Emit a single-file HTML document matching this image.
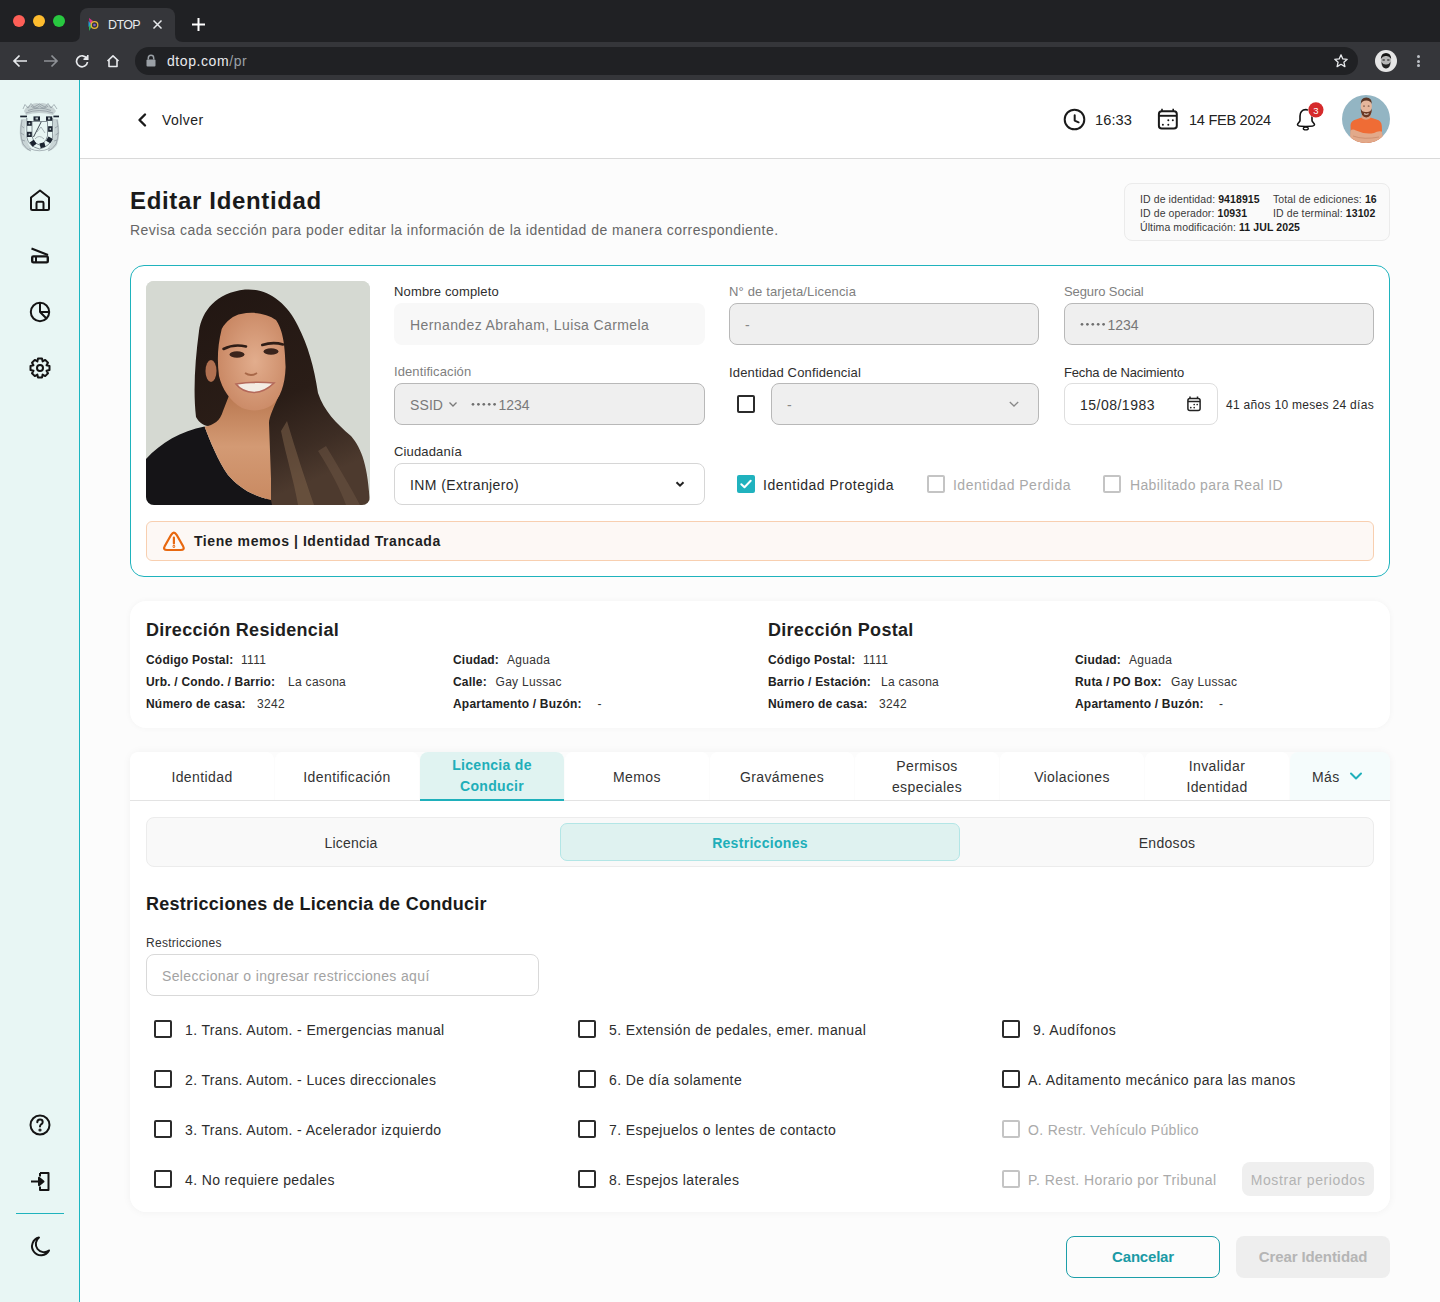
<!DOCTYPE html>
<html><head><meta charset="utf-8">
<style>
*{box-sizing:border-box;margin:0;padding:0}
html,body{width:1440px;height:1302px;overflow:hidden;background:#fcfcfc;font-family:"Liberation Sans",sans-serif;color:#222}
.a{position:absolute}
.t{position:absolute;white-space:nowrap;line-height:1}
/* chrome */
#chrome{position:absolute;left:0;top:0;width:1440px;height:80px;background:#202124}
#toolbar{position:absolute;left:0;top:42px;width:1440px;height:38px;background:#35363a}
#tab{position:absolute;left:80px;top:8px;width:95px;height:34px;background:#35363a;border-radius:8px 8px 0 0}
.dot{position:absolute;top:15px;width:12px;height:12px;border-radius:50%}
#addr{position:absolute;left:135px;top:47px;width:1223px;height:28px;border-radius:14px;background:#202124}
/* sidebar */
#side{position:absolute;left:0;top:80px;width:80px;height:1222px;background:#e8f6f4;border-right:1px solid #1cb6c1}
/* header */
#hdr{position:absolute;left:80px;top:80px;width:1360px;height:79px;background:#fff;border-bottom:1px solid #d9d9d9}
.card{position:absolute;background:#fff}
.lbl{position:absolute;white-space:nowrap;line-height:1;font-size:13px;letter-spacing:0.15px;color:#333}
.inp{position:absolute;height:42px;border-radius:8px}
.dis{background:#efefef;border:1px solid #b8b8b8}
.cb{position:absolute;width:18px;height:18px;border:2px solid #2b2b2b;border-radius:2px}
.cbg{border-color:#c4c4c4}
.tabx{position:absolute;top:752px;width:144px;height:48px;background:#fff;border-radius:8px 8px 0 0;font-size:14px;letter-spacing:0.4px;color:#333;display:flex;align-items:center;justify-content:center;text-align:center;line-height:21px;padding-top:2px}
.addr-l{font-weight:bold;font-size:12px;color:#222}
.addr-v{font-size:12px;letter-spacing:0.3px;color:#333}
.rtxt{font-size:14px;letter-spacing:0.37px;color:#2d2d2d}
</style></head>
<body>
<!-- ============ CHROME ============ -->
<div id="chrome">
  <div class="dot" style="left:13px;background:#fe5f57"></div>
  <div class="dot" style="left:33px;background:#febc2e"></div>
  <div class="dot" style="left:53px;background:#28c840"></div>
  <div id="tab"></div>
  <svg class="a" style="left:72px;top:34px" width="8" height="8"><path d="M0 8 Q8 8 8 0 V8 Z" fill="#35363a"/></svg>
  <svg class="a" style="left:175px;top:34px" width="8" height="8"><path d="M8 8 Q0 8 0 0 V8 Z" fill="#35363a"/></svg>
  <svg class="a" style="left:88px;top:17px" width="11" height="15" viewBox="0 0 11 15"><path d="M1 1 L5 4 L2 8 Z" fill="#e0338a"/><path d="M1 6 L4 9 L1 14 Z" fill="#2fb35a"/><path d="M0.5 4 L3 7 L0.5 10 Z" fill="#1f9fd9"/><circle cx="6.5" cy="8" r="3.3" fill="none" stroke="#e7b43a" stroke-width="1.3"/><circle cx="6.5" cy="8" r="1.3" fill="#7a5bd0"/></svg>
  <div class="t" style="left:108px;top:18.5px;font-size:12.5px;letter-spacing:-0.6px;color:#e8eaed">DTOP</div>
  <svg class="a" style="left:152px;top:19px" width="11" height="11" viewBox="0 0 11 11" stroke="#e8eaed" stroke-width="1.5"><path d="M1.5 1.5 L9.5 9.5 M9.5 1.5 L1.5 9.5"/></svg>
  <svg class="a" style="left:191px;top:17px" width="15" height="15" viewBox="0 0 15 15" stroke="#fff" stroke-width="2"><path d="M7.5 1 V14 M1 7.5 H14"/></svg>
  <div id="toolbar"></div>
  <svg class="a" style="left:12px;top:54px" width="16" height="14" viewBox="0 0 16 14" fill="none" stroke="#e8eaed" stroke-width="1.7"><path d="M15 7 H2 M7.5 1.5 L2 7 L7.5 12.5"/></svg>
  <svg class="a" style="left:43px;top:54px" width="16" height="14" viewBox="0 0 16 14" fill="none" stroke="#8e9196" stroke-width="1.7"><path d="M1 7 H14 M8.5 1.5 L14 7 L8.5 12.5"/></svg>
  <svg class="a" style="left:75px;top:54px" width="14" height="14" viewBox="0 0 14 14" fill="none" stroke="#e8eaed" stroke-width="1.7"><path d="M11.8 4.5 A5.5 5.5 0 1 0 12.5 8"/><path d="M12.8 1 V5.3 H8.5" stroke-width="1.5" fill="#e8eaed"/></svg>
  <svg class="a" style="left:106px;top:54px" width="14" height="14" viewBox="0 0 14 14" fill="none" stroke="#e8eaed" stroke-width="1.6" stroke-linejoin="round"><path d="M1.5 7 L7 1.8 L12.5 7 M3 5.8 V12.5 H11 V5.8"/></svg>
  <div id="addr"></div>
  <svg class="a" style="left:146px;top:54px" width="10" height="13" viewBox="0 0 10 13"><path d="M2.3 5.5 V4 Q2.3 1.3 5 1.3 Q7.7 1.3 7.7 4 V5.5" fill="none" stroke="#9aa0a6" stroke-width="1.5"/><rect x="0.5" y="5.5" width="9" height="7" rx="1" fill="#9aa0a6"/></svg>
  <div class="t" style="left:167px;top:54px;font-size:14px;letter-spacing:0.58px;color:#e8eaed">dtop.com<span style="color:#9aa0a6">/pr</span></div>
  <svg class="a" style="left:1333px;top:53px" width="16" height="16" viewBox="0 0 16 16" fill="none" stroke="#e8eaed" stroke-width="1.3" stroke-linejoin="round"><path d="M8 1.8 L9.8 5.9 L14.2 6.3 L10.9 9.2 L11.9 13.6 L8 11.3 L4.1 13.6 L5.1 9.2 L1.8 6.3 L6.2 5.9 Z"/></svg>
  <div class="a" style="left:1375px;top:50px;width:22px;height:22px;border-radius:50%;background:#e6e6e6;overflow:hidden">
    <svg width="22" height="22" viewBox="0 0 22 22"><ellipse cx="11" cy="11.5" rx="5.2" ry="7" fill="#b5b5b5"/><path d="M5.8 9 Q6 3 11 3 Q16 3 16.2 9 Q14 5.5 11 6 Q8 5.5 5.8 9 Z" fill="#151515"/><path d="M6.5 12 Q7 18.5 11 18.5 Q15 18.5 15.5 12 Q13.5 15 11 14.5 Q8.5 15 6.5 12 Z" fill="#222"/><rect x="7.5" y="9.5" width="2.3" height="1" fill="#111"/><rect x="12.2" y="9.5" width="2.3" height="1" fill="#111"/></svg>
  </div>
  <div class="a" style="left:1416.5px;top:55px;width:3px;height:3px;border-radius:50%;background:#bdc1c6"></div>
  <div class="a" style="left:1416.5px;top:59.5px;width:3px;height:3px;border-radius:50%;background:#bdc1c6"></div>
  <div class="a" style="left:1416.5px;top:64px;width:3px;height:3px;border-radius:50%;background:#bdc1c6"></div>
</div>
<!-- ============ SIDEBAR ============ -->
<div id="side"></div>
<!-- logo -->
<svg class="a" style="left:15px;top:100px" width="50" height="56" viewBox="15 100 50 56">
 <path d="M24 111 Q26 106 31 105 Q35 102 39.5 103.5 Q44 102 48 105 Q53 106 56 111 L53 115 Q39.5 111 26 115 Z" fill="#a9b3b7" opacity="0.55"/>
 <path d="M21 119 Q18 134 22 145 Q26 150 30 151 L31 148 Q26 142 25 132 L26 119 Z M58 119 Q61 134 57 145 Q53 150 49 151 L48 148 Q53 142 54 132 L53 119 Z" fill="#a9b3b7" opacity="0.5"/>
 <g fill="none" stroke="#7d8890" stroke-width="0.6">
  <path d="M23 109 L25 104.5 L28 108 L31 103.5 L34 107 L39.5 104 L45 107 L48 103.5 L51 108 L54 104.5 L57 109"/>
  <path d="M26 113 Q39.5 108 53 113 M28 110.5 Q39.5 106 51 110.5"/>
  <path d="M31 106 Q35 110 39.5 106 Q44 110 48 106"/>
  <path d="M22 120 Q19 134 23 144 Q27 150 31 151 M57 120 Q60 134 56 144 Q52 150 48 151"/>
  <path d="M21.5 126 L24 128 M21 133 L24 135 M22 140 L25 141 M58 126 L55 128 M58.5 133 L55.5 135 M57 140 L54 141"/>
  <path d="M29.5 148.5 Q39.5 153 49.5 148.5"/>
  <path d="M35 139 Q39 134 44 139 M37 132 L41 127 L45 133"/>
 </g>
 <g fill="none" stroke="#5a656e" stroke-width="0.7">
  <path d="M26.8 118 L26.8 137 Q28 146 39.5 149 Q51 146 52.6 137 L52.6 118"/>
  <path d="M32 121.5 L32 136 Q33.5 143 39.5 145 Q45.5 143 47.5 136 L47.5 121.5 Z"/>
 </g>
 <path d="M41.2 121.9 L33.5 137" stroke="#2b3540" stroke-width="0.9"/>
 <g fill="#1b2430">
  <rect x="20.2" y="115.6" width="6.8" height="1.7"/>
  <rect x="53.4" y="115.6" width="5.6" height="1.7"/>
  <rect x="33.5" y="116.4" width="6.5" height="4.4"/>
  <rect x="46" y="116.4" width="6.2" height="4.4"/>
  <rect x="27" y="121" width="4.8" height="4.8"/>
  <rect x="27" y="131.8" width="4.8" height="5.2"/>
  <rect x="48.1" y="126.2" width="4.4" height="5.6"/>
  <rect x="30.6" y="140.7" width="5" height="5" transform="rotate(-35 33.1 143.2)"/>
  <rect x="40" y="142.8" width="5" height="4.8" transform="rotate(-15 42.5 145.2)"/>
  <rect x="46.9" y="137.3" width="5" height="5" transform="rotate(30 49.4 139.8)"/>
 </g>
 <g fill="#b9c4c6">
  <rect x="35.5" y="117.5" width="2.5" height="2"/><rect x="48" y="117.5" width="2.2" height="2"/>
  <circle cx="29.4" cy="123.4" r="0.9"/><circle cx="29.4" cy="134.4" r="0.9"/><circle cx="50.3" cy="129" r="0.9"/>
 </g>
</svg>
<!-- nav icons -->
<svg class="a" style="left:28px;top:188px" width="24" height="24" viewBox="0 0 24 24" fill="none" stroke="#141414" stroke-width="2" stroke-linejoin="round">
 <path d="M3 9.5 L12 2.5 L21 9.5 V20.5 Q21 22 19.5 22 H4.5 Q3 22 3 20.5 Z"/>
 <path d="M8.5 22 V15 Q8.5 13.8 9.7 13.8 H14.3 Q15.5 13.8 15.5 15 V22"/>
</svg>
<svg class="a" style="left:28px;top:244px" width="24" height="24" viewBox="0 0 24 24" fill="none" stroke="#141414" stroke-width="2" stroke-linejoin="round">
 <path d="M3.5 4.5 L20 11"/>
 <rect x="4.2" y="12.4" width="15.6" height="6" rx="1.2" stroke-width="2.4"/>
 <path d="M8 13 V18"/>
</svg>
<svg class="a" style="left:28px;top:300px" width="24" height="24" viewBox="0 0 24 24" fill="none" stroke="#141414" stroke-width="2" stroke-linejoin="round">
 <circle cx="12" cy="12" r="9.2"/>
 <path d="M12 2.8 V12 H21.2 M12 12 L18.5 18.5"/>
</svg>
<svg class="a" style="left:28px;top:356px" width="24" height="24" viewBox="0 0 24 24" fill="none" stroke="#141414" stroke-width="2" stroke-linejoin="round">
 <path d="M10 2.5 H14 L14.6 5.4 L17.2 3.9 L20 6.7 L18.5 9.3 L21.5 10 V14 L18.5 14.7 L20 17.3 L17.2 20.1 L14.6 18.6 L14 21.5 H10 L9.4 18.6 L6.8 20.1 L4 17.3 L5.5 14.7 L2.5 14 V10 L5.5 9.3 L4 6.7 L6.8 3.9 L9.4 5.4 Z"/>
 <circle cx="12" cy="12" r="3"/>
</svg>
<svg class="a" style="left:28px;top:1113px" width="24" height="24" viewBox="0 0 24 24" fill="none" stroke="#141414" stroke-width="2" stroke-linecap="round">
 <circle cx="12" cy="12" r="9.5"/>
 <path d="M9.3 9.2 Q9.3 6.6 12 6.6 Q14.7 6.6 14.7 9 Q14.7 10.6 12.9 11.5 Q12 12 12 13.6"/>
 <circle cx="12" cy="17" r="0.6" fill="#141414"/>
</svg>
<svg class="a" style="left:28px;top:1169px" width="24" height="24" viewBox="0 0 24 24" fill="none" stroke="#141414" stroke-width="2" stroke-linejoin="round">
 <path d="M12 4 H20.5 V21 H12 V17.5"/>
 <path d="M12 7.5 V4"/>
 <path d="M3 12.5 H13"/>
 <path d="M11 8.8 L15.5 12.5 L11 16.2 Z" fill="#141414"/>
</svg>
<div class="a" style="left:16px;top:1213px;width:48px;height:1px;background:#1fb3bd"></div>
<svg class="a" style="left:28px;top:1234px" width="24" height="24" viewBox="0 0 24 24" fill="none" stroke="#141414" stroke-width="2" stroke-linejoin="round">
 <path d="M11 3.5 A9 9 0 1 0 21 16.5 A7.5 7.5 0 0 1 11 3.5 Z"/>
</svg>
<!-- ============ HEADER ============ -->
<div id="hdr"></div>
<svg class="a" style="left:134px;top:111px" width="18" height="18" viewBox="0 0 18 18" fill="none" stroke="#1a1a1a" stroke-width="2.4" stroke-linecap="round" stroke-linejoin="round"><path d="M11 3.5 L5.5 9 L11 14.5"/></svg>
<svg class="a" style="left:1062px;top:107px" width="25" height="25" viewBox="0 0 25 25" fill="none" stroke="#1a1a1a" stroke-width="2" stroke-linecap="round" stroke-linejoin="round"><circle cx="12.5" cy="12.5" r="9.8"/><path d="M12.7 8.2 V13.6 L16.6 15.3"/></svg>
<svg class="a" style="left:1155px;top:106px" width="25" height="25" viewBox="0 0 25 25" fill="none" stroke="#1a1a1a" stroke-width="2" stroke-linejoin="round"><rect x="3.9" y="5.3" width="17.9" height="17.2" rx="2.8"/><path d="M3.9 9.8 H21.8" stroke-width="1.9"/><path d="M7 2.8 V5 M18.2 2.8 V5" stroke-width="1.6"/><g fill="#1a1a1a" stroke="none"><circle cx="13.3" cy="14.3" r="1"/><circle cx="17.8" cy="14.3" r="1"/><circle cx="7.9" cy="18.8" r="1"/><circle cx="13.3" cy="18.8" r="1"/></g></svg>
<svg class="a" style="left:1285px;top:98px" width="50" height="40" viewBox="1285 98 50 40" fill="none" stroke="#111" stroke-width="1.6">
 <path d="M1305.8 109.6 C1302 109.6 1300 112.5 1300 116 L1300 120.5 C1300 122 1297.5 123 1297.5 124.8 C1297.5 126 1299 126.5 1305.8 126.5 C1312.6 126.5 1314.5 126 1314.5 124.8 C1314.5 123 1312 122 1312 120.5 L1312 116 C1312 112.5 1309.6 109.6 1305.8 109.6 Z"/>
 <ellipse cx="1305.8" cy="128.5" rx="2.5" ry="1.4" stroke-width="1.3"/>
 <circle cx="1315.9" cy="109.8" r="8.1" fill="#fff" stroke="none"/>
 <circle cx="1315.9" cy="109.8" r="7.6" fill="#d52a2b" stroke="none"/>
</svg>
<div class="t" style="left:1308.4px;top:105.5px;width:15px;text-align:center;font-size:9.5px;color:#fff">3</div>
<!-- avatar -->
<div class="a" style="left:1342px;top:95px;width:48px;height:48px;border-radius:50%;background:#93b5c3;overflow:hidden">
 <svg width="48" height="48" viewBox="0 0 48 48">
  <path d="M9 48 L8.5 30 Q9 25.5 14 24.5 L19.5 22.5 Q24 25.5 28.5 22.5 L34.5 24.5 Q39.5 25.5 39.8 31 L40.5 48 Z" fill="#ef6c35"/>
  <path d="M19.5 20 L28.5 20 L28.5 23 Q24 26.5 19.5 23 Z" fill="#d9a184"/>
  <path d="M8.5 36 Q10 33.5 14 35.5 Q24 40 32 38 Q36 35.5 39.8 36.5 L41 44 Q34 48 24 48 Q12 48 8 44 Z" fill="#e2a98a"/>
  <path d="M11 41 Q22 45 37 42" stroke="#c98a6c" stroke-width="0.8" fill="none"/>
  <ellipse cx="24.3" cy="11" rx="5.6" ry="7.2" fill="#e6b79c"/>
  <path d="M18.7 13.5 Q18.8 22 24.3 22.5 Q29.8 22 29.9 13.5 Q28.5 17.5 24.3 17 Q20 17.5 18.7 13.5 Z" fill="#6b3822"/>
  <path d="M18.8 9 Q18.5 2.5 24.3 2.5 Q30 2.5 29.8 9 Q28.5 5.5 24.3 5.5 Q20 5.5 18.8 9 Z" fill="#5b3726"/>
  <path d="M22 18.8 Q24.3 19.8 26.6 18.8" stroke="#f4e6dc" stroke-width="1" fill="none"/><ellipse cx="22" cy="11" rx="1" ry="0.6" fill="#5a3a2a"/><ellipse cx="26.6" cy="11" rx="1" ry="0.6" fill="#5a3a2a"/>
 </svg>
</div>
<div class="t" style="left:162px;top:113px;font-size:14px;letter-spacing:0.43px;color:#222">Volver</div>
<div class="t" style="left:1095px;top:113px;font-size:14.6px;letter-spacing:0.1px;color:#222">16:33</div>
<div class="t" style="left:1189px;top:113px;font-size:14.6px;letter-spacing:-0.3px;color:#222">14 FEB 2024</div>

<!-- ============ TITLE ============ -->
<div class="t" style="left:130px;top:189px;font-size:24px;font-weight:bold;letter-spacing:0.66px;color:#1a1a1a">Editar Identidad</div>
<div class="t" style="left:130px;top:223px;font-size:14px;letter-spacing:0.47px;color:#666">Revisa cada sección para poder editar la información de la identidad de manera correspondiente.</div>

<!-- info box -->
<div class="a" style="left:1124px;top:183px;width:266px;height:58px;border:1px solid #ebebeb;border-radius:8px;background:#fafafa"></div>
<div class="t" style="left:1140px;top:192px;font-size:10.5px;line-height:14px;letter-spacing:0.1px;color:#3a3a3a">ID de identidad: <b style="color:#1a1a1a">9418915</b><br>ID de operador: <b style="color:#1a1a1a">10931</b><br>Última modificación: <b style="color:#1a1a1a">11 JUL 2025</b></div>
<div class="t" style="left:1273px;top:192px;font-size:10.5px;line-height:14px;letter-spacing:0.1px;color:#3a3a3a">Total de ediciones: <b style="color:#1a1a1a">16</b><br>ID de terminal: <b style="color:#1a1a1a">13102</b></div>

<!-- ============ IDENTITY CARD ============ -->
<div class="card" style="left:130px;top:265px;width:1260px;height:312px;border:1px solid #1fb3bd;border-radius:14px"></div>
<!-- photo -->
<div class="a" style="left:146px;top:281px;width:224px;height:224px;border-radius:8px;overflow:hidden;background:#d5d9d2">
<svg width="224" height="224" viewBox="0 0 224 224">
 <defs>
  <linearGradient id="hairg" x1="0" y1="0" x2="0.35" y2="1"><stop offset="0" stop-color="#211612"/><stop offset="0.6" stop-color="#2a1d17"/><stop offset="0.85" stop-color="#3d2d24"/><stop offset="1" stop-color="#4d3a2e"/></linearGradient>
  <radialGradient id="skin" cx="0.55" cy="0.5" r="0.6"><stop offset="0" stop-color="#e2ad8d"/><stop offset="1" stop-color="#c88662"/></radialGradient>
  <linearGradient id="neck" x1="0" y1="0" x2="0" y2="1"><stop offset="0" stop-color="#b9774f"/><stop offset="0.5" stop-color="#d39a74"/><stop offset="1" stop-color="#c98a62"/></linearGradient>
 </defs>
 <rect width="224" height="224" fill="#d5d9d2"/>
 <path d="M99 8.6 C120 7 140 20 152 45 C162 65 168 85 172 112 C178 130 190 142 205 155 C216 168 222 185 224 224 L120 224 L120 130 L76 142 C66 147 56 147 50 136 C47 110 49 80 53 50 C56 30 70 12 99 8.6 Z" fill="url(#hairg)"/>
 <path d="M0 178 C15 162 35 150 58.6 145.6 C64 160 72 180 82 194 C92 205 103 214 125 219 L126 224 L0 224 Z" fill="#151417"/>
 <path d="M84 112 L134 112 C128 126 123 136 123 142 L125 198 L125 219 C103 214 92 205 82 194 C72 180 64 160 58.6 145.6 C68 144 74 140 77 130 Z" fill="url(#neck)"/>
 <ellipse cx="65" cy="90" rx="5.5" ry="11" fill="#b07050"/>
 <path d="M95 33 C108 30 122 33 130 39 C136 48 139 60 139.6 86 C139 105 134 117 126 124 C118 130 106 131 96 127 C84 120 76 108 73 95 C71 80 71.5 65 75.7 48 C80 40 88 34 95 33 Z" fill="url(#skin)"/>
 <path d="M135 150 C140 175 148 200 152 224 L168 224 C158 195 150 170 141 140 Z" fill="#7b6048" opacity="0.55"/>
 <path d="M172 170 C185 190 195 210 200 224 L214 224 C204 205 192 185 180 165 Z" fill="#6e5644" opacity="0.5"/>
 <path d="M77.5 68 Q88 62.5 100 65.5" stroke="#2e1d16" stroke-width="2.6" fill="none" stroke-linecap="round"/>
 <path d="M116.3 64 Q127 60.5 137 63.5" stroke="#2e1d16" stroke-width="2.6" fill="none" stroke-linecap="round"/>
 <ellipse cx="91" cy="73.5" rx="7.5" ry="3.2" fill="#3a241c"/>
 <ellipse cx="125" cy="70.5" rx="7.5" ry="3.2" fill="#3a241c"/>
 <path d="M99 92 Q105 96 111 92" stroke="#a86848" stroke-width="1.8" fill="none"/>
 <path d="M90 103 Q108 100 128 102 Q119 111 108 111.5 Q96 111 90 103 Z" fill="#f3ece4" stroke="#b4695a" stroke-width="1.6"/>
</svg>
</div>
<!-- row1 -->
<div class="lbl" style="left:394px;top:284.5px;color:#2e2e2e">Nombre completo</div>
<div class="inp" style="left:394px;top:303px;width:311px;background:#f8f8f8"></div>
<div class="t" style="left:410px;top:318px;font-size:14px;letter-spacing:0.4px;color:#7a7a7a">Hernandez Abraham, Luisa Carmela</div>
<div class="lbl" style="left:729px;top:284.5px;color:#808080">N° de tarjeta/Licencia</div>
<div class="inp dis" style="left:729px;top:303px;width:310px"></div>
<div class="t" style="left:745px;top:318px;font-size:14px;color:#888">-</div>
<div class="lbl" style="left:1064px;top:284.5px;color:#808080;letter-spacing:-0.1px">Seguro Social</div>
<div class="inp dis" style="left:1064px;top:303px;width:310px"></div>
<svg class="a" style="left:1079px;top:322px" width="28" height="5" viewBox="0 0 28 5" fill="#6f6f6f"><circle cx="3" cy="2.3" r="1.35"/><circle cx="8.4" cy="2.3" r="1.35"/><circle cx="13.8" cy="2.3" r="1.35"/><circle cx="19.2" cy="2.3" r="1.35"/><circle cx="24.6" cy="2.3" r="1.35"/></svg><div class="t" style="left:1107.5px;top:317.5px;font-size:14px;color:#777">1234</div>
<!-- row2 -->
<div class="lbl" style="left:394px;top:364.5px;color:#808080;letter-spacing:0.1px">Identificación</div>
<div class="inp dis" style="left:394px;top:383px;width:311px"></div>
<div class="t" style="left:410px;top:398px;font-size:14px;letter-spacing:0.1px;color:#7a7a7a">SSID</div>
<svg class="a" style="left:447px;top:398px" width="12" height="12" viewBox="0 0 12 12" fill="none" stroke="#7a7a7a" stroke-width="1.3"><path d="M2.5 4.5 L6 8 L9.5 4.5"/></svg>
<svg class="a" style="left:470px;top:402px" width="28" height="5" viewBox="0 0 28 5" fill="#6f6f6f"><circle cx="3" cy="2.3" r="1.35"/><circle cx="8.4" cy="2.3" r="1.35"/><circle cx="13.8" cy="2.3" r="1.35"/><circle cx="19.2" cy="2.3" r="1.35"/><circle cx="24.6" cy="2.3" r="1.35"/></svg><div class="t" style="left:498.5px;top:397.5px;font-size:14px;color:#7a7a7a">1234</div>
<div class="lbl" style="left:729px;top:365.5px;color:#2e2e2e">Identidad Confidencial</div>
<div class="cb" style="left:737px;top:395px"></div>
<div class="inp dis" style="left:771px;top:383px;width:268px"></div>
<div class="t" style="left:787px;top:398px;font-size:14px;color:#888">-</div>
<svg class="a" style="left:1008px;top:398px" width="12" height="12" viewBox="0 0 12 12" fill="none" stroke="#888" stroke-width="1.3"><path d="M1.8 4 L6 8 L10.2 4"/></svg>
<div class="lbl" style="left:1064px;top:365.5px;color:#2e2e2e;letter-spacing:-0.15px">Fecha de Nacimiento</div>
<div class="inp" style="left:1064px;top:383px;width:154px;border:1px solid #dedede;background:#fff"></div>
<div class="t" style="left:1080px;top:398px;font-size:14px;letter-spacing:0.49px;color:#2a2a2a">15/08/1983</div>
<svg class="a" style="left:1185px;top:395px" width="17" height="17" viewBox="0 0 17 17" fill="none" stroke="#222" stroke-width="1.5" stroke-linejoin="round"><rect x="2.9" y="3.4" width="12.2" height="12" rx="2"/><path d="M2.9 6.6 H15.1 M5 1.6 V3.6 M12.5 1.6 V3.6"/><g fill="#222" stroke="none"><circle cx="9.2" cy="9.5" r=".85"/><circle cx="12.2" cy="9.5" r=".85"/><circle cx="5.8" cy="12.6" r=".85"/><circle cx="9.2" cy="12.6" r=".85"/></g></svg>
<div class="t" style="left:1226px;top:398.5px;font-size:12px;letter-spacing:0.3px;color:#2a2a2a">41 años 10 meses 24 días</div>
<!-- row3 -->
<div class="lbl" style="left:394px;top:444.5px;color:#2e2e2e">Ciudadanía</div>
<div class="inp" style="left:394px;top:463px;width:311px;border:1px solid #d6d6d6;background:#fff"></div>
<div class="t" style="left:410px;top:477.5px;font-size:14px;letter-spacing:0.4px;color:#2a2a2a">INM (Extranjero)</div>
<svg class="a" style="left:674px;top:478px" width="12" height="12" viewBox="0 0 12 12" fill="none" stroke="#222" stroke-width="2"><path d="M2.5 4.2 L6 7.7 L9.5 4.2"/></svg>
<div class="a" style="left:737px;top:475px;width:18px;height:18px;border-radius:2px;background:#20b2be"></div>
<svg class="a" style="left:737px;top:475px" width="18" height="18" viewBox="0 0 18 18" fill="none" stroke="#fff" stroke-width="2" stroke-linecap="round" stroke-linejoin="round"><path d="M4.3 9.3 L7.5 12.3 L13.7 5.8"/></svg>
<div class="t" style="left:763px;top:478px;font-size:14px;letter-spacing:0.5px;color:#2a2a2a">Identidad Protegida</div>
<div class="cb cbg" style="left:927px;top:475px"></div>
<div class="t" style="left:953px;top:478px;font-size:14px;letter-spacing:0.48px;color:#a9a9a9">Identidad Perdida</div>
<div class="cb cbg" style="left:1103px;top:475px"></div>
<div class="t" style="left:1130px;top:478px;font-size:14px;letter-spacing:0.36px;color:#a9a9a9">Habilitado para Real ID</div>
<!-- alert -->
<div class="a" style="left:146px;top:521px;width:1228px;height:40px;border:1px solid #f8cfb0;border-radius:6px;background:#fdf8f5"></div>
<svg class="a" style="left:160px;top:528.8px" width="28" height="26" viewBox="160 528 28 26" fill="none" stroke="#e8680f" stroke-width="2.2" stroke-linejoin="round" stroke-linecap="round"><path d="M171.2 533.8 Q173.9 529.6 176.6 533.8 L183 545 Q185.2 549 180.8 549 L167 549 Q162.6 549 164.8 545 Z"/><path d="M173.9 536.6 V542.4"/><circle cx="173.9" cy="545.5" r="0.4" stroke-width="2"/></svg>
<div class="t" style="left:194px;top:534px;font-size:14px;font-weight:bold;letter-spacing:0.57px;color:#1f1f1f">Tiene memos | Identidad Trancada</div>

<!-- ============ ADDRESS CARD ============ -->
<div class="card" style="left:130px;top:601px;width:1260px;height:127px;border-radius:16px;box-shadow:0 0 6px rgba(0,0,0,0.04)"></div>
<div class="t" style="left:146px;top:620.5px;font-size:18px;font-weight:bold;letter-spacing:0.28px;color:#1f1f1f">Dirección Residencial</div>
<div class="t" style="left:768px;top:620.5px;font-size:18px;font-weight:bold;letter-spacing:0.28px;color:#1f1f1f">Dirección Postal</div>
<div class="t addr-l" style="left:146px;top:654px;letter-spacing:0.2px">Código Postal:</div><div class="t addr-v" style="left:241px;top:654px">1111</div>
<div class="t addr-l" style="left:146px;top:676px;letter-spacing:0.2px">Urb. / Condo. / Barrio:</div><div class="t addr-v" style="left:288px;top:676px">La casona</div>
<div class="t addr-l" style="left:146px;top:698px;letter-spacing:0.2px">Número de casa:</div><div class="t addr-v" style="left:257px;top:698px">3242</div>
<div class="t addr-l" style="left:453px;top:654px;letter-spacing:0.2px">Ciudad:</div><div class="t addr-v" style="left:507px;top:654px">Aguada</div>
<div class="t addr-l" style="left:453px;top:676px;letter-spacing:0.2px">Calle:</div><div class="t addr-v" style="left:495.5px;top:676px">Gay Lussac</div>
<div class="t addr-l" style="left:453px;top:698px;letter-spacing:0.2px">Apartamento / Buzón:</div><div class="t addr-v" style="left:597.5px;top:698px">-</div>
<div class="t addr-l" style="left:768px;top:654px;letter-spacing:0.2px">Código Postal:</div><div class="t addr-v" style="left:863px;top:654px">1111</div>
<div class="t addr-l" style="left:768px;top:676px;letter-spacing:0.2px">Barrio / Estación:</div><div class="t addr-v" style="left:881px;top:676px">La casona</div>
<div class="t addr-l" style="left:768px;top:698px;letter-spacing:0.2px">Número de casa:</div><div class="t addr-v" style="left:879px;top:698px">3242</div>
<div class="t addr-l" style="left:1075px;top:654px;letter-spacing:0.2px">Ciudad:</div><div class="t addr-v" style="left:1129px;top:654px">Aguada</div>
<div class="t addr-l" style="left:1075px;top:676px;letter-spacing:0.2px">Ruta / PO Box:</div><div class="t addr-v" style="left:1171px;top:676px">Gay Lussac</div>
<div class="t addr-l" style="left:1075px;top:698px;letter-spacing:0.2px">Apartamento / Buzón:</div><div class="t addr-v" style="left:1219px;top:698px">-</div>

<!-- ============ TABS CARD ============ -->
<div class="a" style="left:130px;top:752px;width:1260px;height:460px;border-radius:10px 10px 16px 16px;box-shadow:0 0 8px rgba(0,0,0,0.05)"></div>
<div class="card" style="left:130px;top:800px;width:1260px;height:412px;border-radius:0 0 16px 16px"></div>
<div class="tabx" style="left:130px">Identidad</div>
<div class="tabx" style="left:275px">Identificación</div>
<div class="tabx" style="left:420px;background:#e0f3f1;color:#20aeb9;font-weight:bold;letter-spacing:0.3px;padding-bottom:2px">Licencia de<br>Conducir</div>
<div class="a" style="left:420px;top:798.5px;width:144px;height:2.5px;background:#1fb0bb;z-index:2"></div>
<div class="tabx" style="left:565px">Memos</div>
<div class="tabx" style="left:710px">Gravámenes</div>
<div class="tabx" style="left:855px">Permisos<br>especiales</div>
<div class="tabx" style="left:1000px">Violaciones</div>
<div class="tabx" style="left:1145px">Invalidar<br>Identidad</div>
<div class="tabx" style="left:1290px;width:100px;background:#f5fcfc;justify-content:flex-start;padding-left:22px">Más</div>
<svg class="a" style="left:1348px;top:768px" width="16" height="16" viewBox="0 0 16 16" fill="none" stroke="#1fb0bb" stroke-width="2" stroke-linecap="round" stroke-linejoin="round"><path d="M3 5.5 L8 10.5 L13 5.5"/></svg>
<div class="a" style="left:130px;top:800px;width:1260px;height:1px;background:#e3e3e3"></div>
<!-- subtabs -->
<div class="a" style="left:146px;top:817px;width:1228px;height:50px;border:1px solid #ececec;border-radius:8px;background:#f9f9f9"></div>
<div class="t" style="left:146px;top:836px;width:410px;text-align:center;font-size:14px;letter-spacing:0.2px;color:#333">Licencia</div>
<div class="a" style="left:560px;top:823px;width:400px;height:38px;border:1px solid #b3e6e6;border-radius:7px;background:#dff2f0"></div>
<div class="t" style="left:560px;top:836px;width:400px;text-align:center;font-size:14px;font-weight:bold;letter-spacing:0.3px;color:#20aeb9">Restricciones</div>
<div class="t" style="left:960px;top:836px;width:414px;text-align:center;font-size:14px;letter-spacing:0.3px;color:#333">Endosos</div>
<!-- restrictions -->
<div class="t" style="left:146px;top:895px;font-size:18px;font-weight:bold;letter-spacing:0.26px;color:#1a1a1a">Restricciones de Licencia de Conducir</div>
<div class="t" style="left:146px;top:937px;font-size:12px;letter-spacing:0.28px;color:#333">Restricciones</div>
<div class="a" style="left:146px;top:954px;width:393px;height:42px;border:1px solid #d9d9d9;border-radius:8px;background:#fff"></div>
<div class="t" style="left:162px;top:969px;font-size:14px;letter-spacing:0.36px;color:#a3a3a3">Seleccionar o ingresar restricciones aquí</div>
<div class="cb" style="left:154px;top:1020px"></div><div class="t rtxt" style="left:185px;top:1023px;letter-spacing:0.37px">1. Trans. Autom. - Emergencias manual</div>
<div class="cb" style="left:154px;top:1070px"></div><div class="t rtxt" style="left:185px;top:1073px;letter-spacing:0.37px">2. Trans. Autom. - Luces direccionales</div>
<div class="cb" style="left:154px;top:1120px"></div><div class="t rtxt" style="left:185px;top:1123px;letter-spacing:0.37px">3. Trans. Autom. - Acelerador izquierdo</div>
<div class="cb" style="left:154px;top:1170px"></div><div class="t rtxt" style="left:185px;top:1173px;letter-spacing:0.37px">4. No requiere pedales</div>
<div class="cb" style="left:578px;top:1020px"></div><div class="t rtxt" style="left:609px;top:1023px;letter-spacing:0.41px">5. Extensión de pedales, emer. manual</div>
<div class="cb" style="left:578px;top:1070px"></div><div class="t rtxt" style="left:609px;top:1073px;letter-spacing:0.41px">6. De día solamente</div>
<div class="cb" style="left:578px;top:1120px"></div><div class="t rtxt" style="left:609px;top:1123px;letter-spacing:0.41px">7. Espejuelos o lentes de contacto</div>
<div class="cb" style="left:578px;top:1170px"></div><div class="t rtxt" style="left:609px;top:1173px;letter-spacing:0.41px">8. Espejos laterales</div>
<div class="cb" style="left:1002px;top:1020px"></div><div class="t rtxt" style="left:1033px;top:1023px;letter-spacing:0.45px">9. Audífonos</div>
<div class="cb" style="left:1002px;top:1070px"></div><div class="t rtxt" style="left:1028px;top:1073px;letter-spacing:0.46px">A. Aditamento mecánico para las manos</div>
<div class="cb cbg" style="left:1002px;top:1120px"></div><div class="t rtxt" style="left:1028px;top:1123px;letter-spacing:0.32px;color:#aaa">O. Restr. Vehículo Público</div>
<div class="cb cbg" style="left:1002px;top:1170px"></div><div class="t rtxt" style="left:1028px;top:1173px;letter-spacing:0.45px;color:#aaa">P. Rest. Horario por Tribunal</div>
<div class="a" style="left:1242px;top:1162px;width:132px;height:34px;border-radius:8px;background:#efefef"></div>
<div class="t" style="left:1242px;top:1173px;width:132px;text-align:center;font-size:14px;letter-spacing:0.6px;color:#b3b3b3">Mostrar periodos</div>

<!-- buttons -->
<div class="a" style="left:1066px;top:1236px;width:154px;height:42px;border:1px solid #1c9fa9;border-radius:8px;background:#fcfcfc"></div>
<div class="t" style="left:1066px;top:1249px;width:154px;text-align:center;font-size:15px;font-weight:bold;letter-spacing:-0.2px;color:#1a9aa5">Cancelar</div>
<div class="a" style="left:1236px;top:1236px;width:154px;height:42px;border-radius:8px;background:#eeeeee"></div>
<div class="t" style="left:1236px;top:1249px;width:154px;text-align:center;font-size:15px;font-weight:bold;letter-spacing:-0.1px;color:#b5b5b5">Crear Identidad</div>
</body></html>
